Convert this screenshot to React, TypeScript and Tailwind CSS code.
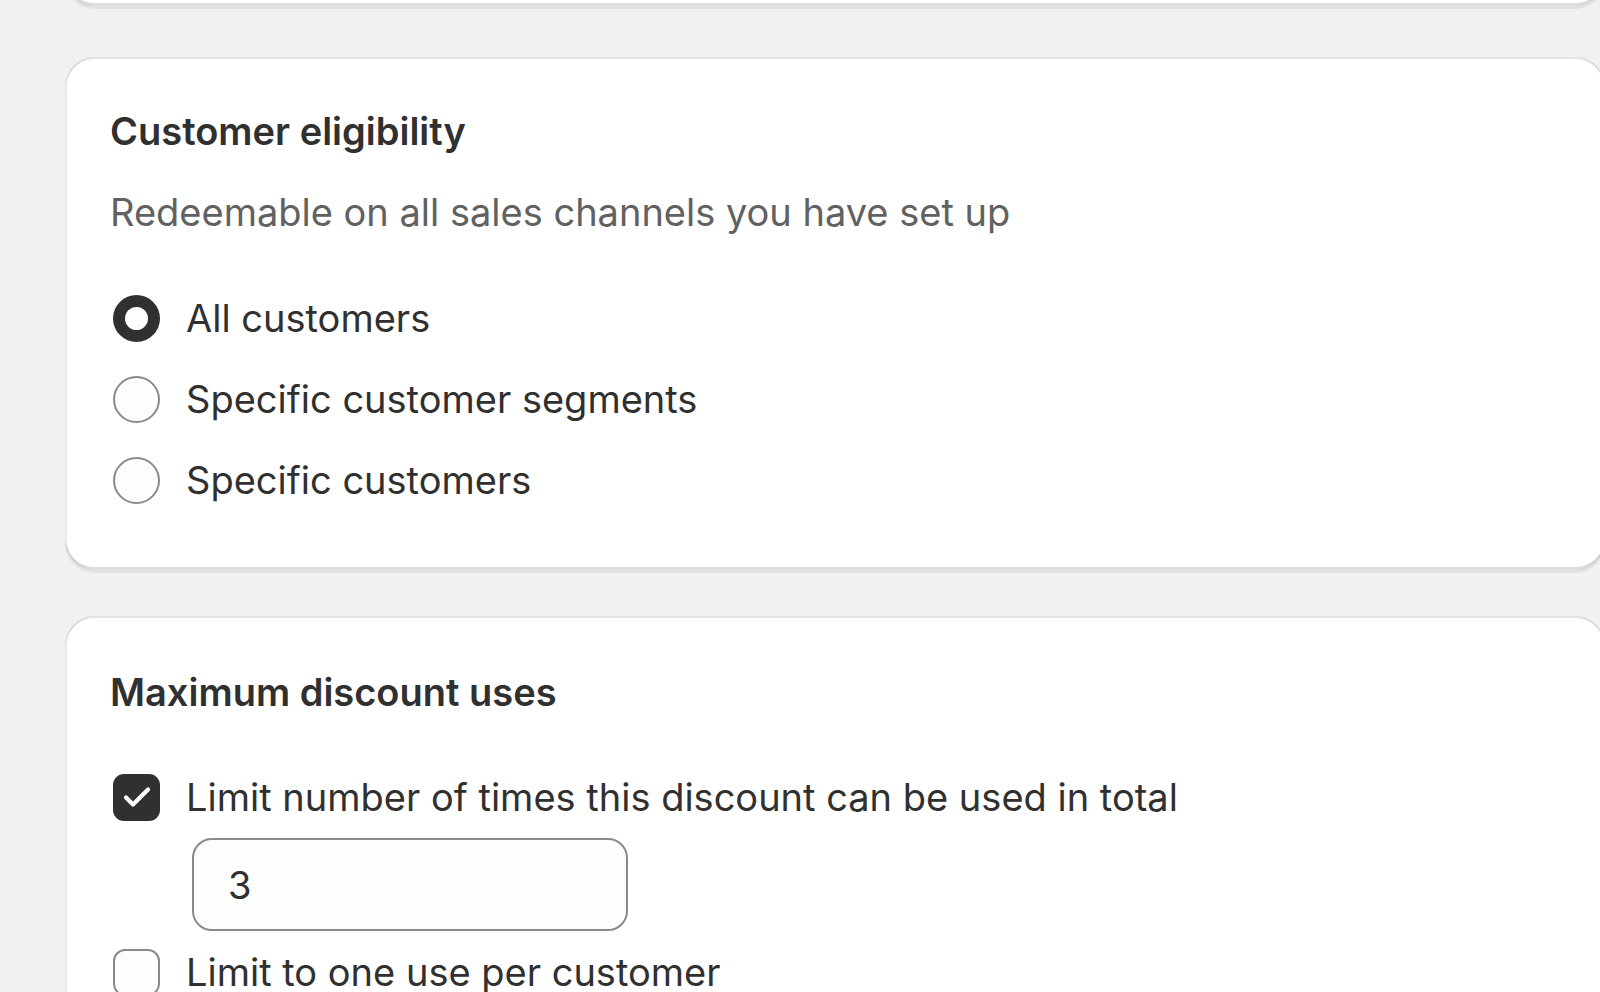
import React from 'react';

const cardClass =
  'w-[1540px] rounded-[30px] bg-white shadow-[0_3px_0_0_rgba(26,26,26,0.07),inset_2px_0_0_0_rgba(0,0,0,0.08),inset_-2px_0_0_0_rgba(0,0,0,0.08),inset_0_-3px_0_0_rgba(0,0,0,0.13),inset_0_2px_0_0_rgba(204,204,204,0.5)]';

function Radio({ checked, label }: { checked?: boolean; label: string }) {
  return (
    <label className="flex h-[52px] items-center">
      <span
        className={
          checked
            ? 'ml-[3px] flex h-[47px] w-[47px] shrink-0 items-center justify-center rounded-full bg-[#303030]'
            : 'ml-[3px] h-[47px] w-[47px] shrink-0 rounded-full border-2 border-[#8a8a8a] bg-[#fdfdfd]'
        }
      >
        {checked && <span className="h-[23px] w-[23px] rounded-full bg-white" />}
      </span>
      <span className="ml-[26px] text-[38px] leading-[52px] text-[#303030]">{label}</span>
    </label>
  );
}

function Checkbox({ checked, label }: { checked?: boolean; label: string }) {
  return (
    <label className="flex h-[52px] items-center">
      {checked ? (
        <span className="ml-[3px] flex h-[47px] w-[47px] shrink-0 items-center justify-center rounded-[11px] bg-[#303030]">
          <svg width="28" height="22" viewBox="0 0 28 22" fill="none">
            <path
              d="M3 11.5l7 7L25 3.5"
              stroke="white"
              strokeWidth="4.2"
              strokeLinecap="round"
              strokeLinejoin="round"
            />
          </svg>
        </span>
      ) : (
        <span className="ml-[3px] h-[47px] w-[47px] shrink-0 rounded-[12px] border-2 border-[#8a8a8a] bg-[#fdfdfd]" />
      )}
      <span className="ml-[26px] text-[38px] leading-[52px] text-[#303030]">{label}</span>
    </label>
  );
}

export default function App() {
  return (
    <div
      className="h-[992px] w-[1600px] overflow-hidden bg-[#f1f1f1] pl-[65px]"
      style={{ fontFamily: 'Inter, "Noto Sans", sans-serif' }}
    >
      <div className={`${cardClass} -mt-[94px] h-[100px]`} />

      <div className={`${cardClass} mt-[51px] px-[45px] pb-[64px] pt-[48px]`}>
        <h2 className="text-[38px] font-semibold leading-[52px] text-[#303030]">Customer eligibility</h2>
        <p className="mt-[29px] text-[38px] leading-[52px] text-[#616161]">
          Redeemable on all sales channels you have set up
        </p>
        <div className="mt-[54px] flex flex-col gap-[29px]">
          <Radio checked label="All customers" />
          <Radio label="Specific customer segments" />
          <Radio label="Specific customers" />
        </div>
      </div>

      <div className={`${cardClass} mt-[46px] px-[45px] pb-[58px] pt-[50px]`}>
        <h2 className="text-[38px] font-semibold leading-[52px] text-[#303030]">Maximum discount uses</h2>
        <div className="mt-[53px] flex flex-col">
          <Checkbox checked label="Limit number of times this discount can be used in total" />
          <div className="ml-[82px] mt-[15px] flex h-[93px] w-[436px] items-center rounded-[20px] border-2 border-[#8a8a8a] bg-[#fdfdfd] px-[34px]">
            <span className="text-[38px] leading-[52px] text-[#303030]">3</span>
          </div>
          <div className="mt-[15px]">
            <Checkbox label="Limit to one use per customer" />
          </div>
        </div>
      </div>
    </div>
  );
}
